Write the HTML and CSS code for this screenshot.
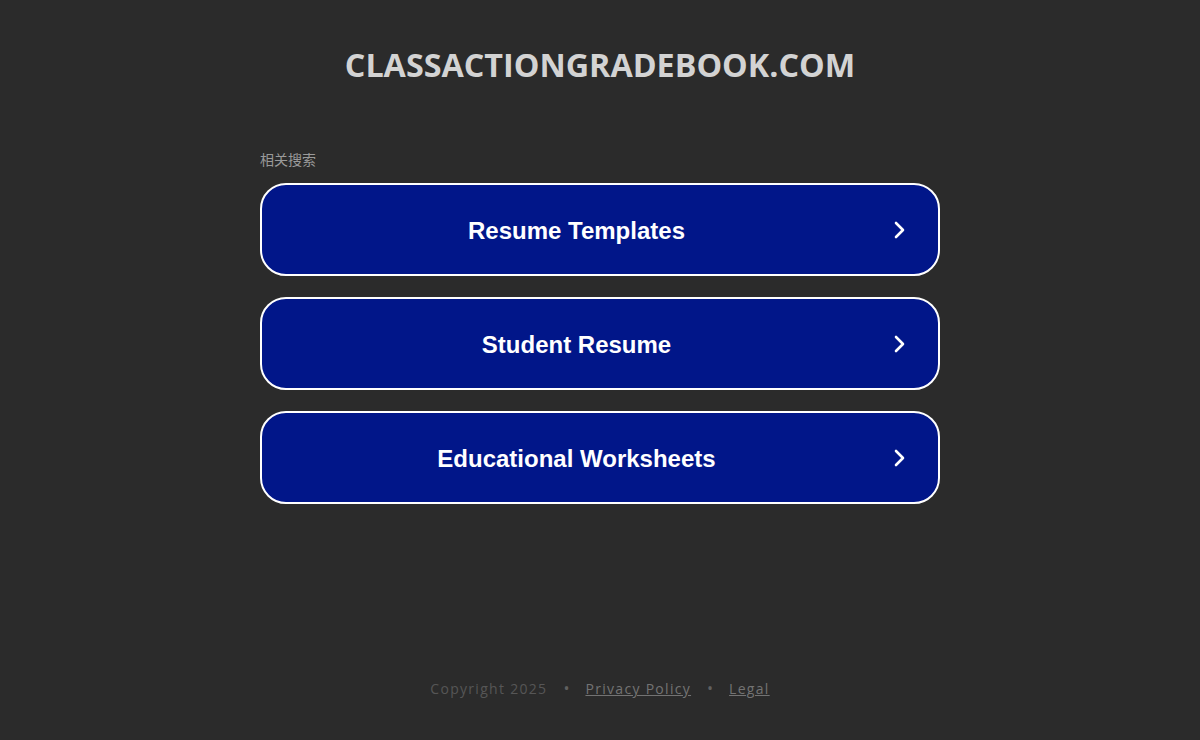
FILE: index.html
```html
<!DOCTYPE html>
<html lang="zh">
<head>
<meta charset="utf-8">
<title>classactiongradebook.com</title>
<link rel="stylesheet" href="styles.css">
</head>
<body>
<div class="page">
  <header class="header">
    <h1 class="domain">CLASSACTIONGRADEBOOK.COM</h1>
  </header>
  <main class="main">
    <div class="label">相关搜索</div>
    <ul class="links">
      <li><a class="btn" href="#"><span class="btn-text">Resume Templates</span><svg class="chev" viewBox="0 0 24 24" width="24" height="24"><path d="M9 5l7 7-7 7" fill="none" stroke="#fff" stroke-width="2.6" stroke-linecap="round" stroke-linejoin="round"/></svg></a></li>
      <li><a class="btn" href="#"><span class="btn-text">Student Resume</span><svg class="chev" viewBox="0 0 24 24" width="24" height="24"><path d="M9 5l7 7-7 7" fill="none" stroke="#fff" stroke-width="2.6" stroke-linecap="round" stroke-linejoin="round"/></svg></a></li>
      <li><a class="btn" href="#"><span class="btn-text">Educational Worksheets</span><svg class="chev" viewBox="0 0 24 24" width="24" height="24"><path d="M9 5l7 7-7 7" fill="none" stroke="#fff" stroke-width="2.6" stroke-linecap="round" stroke-linejoin="round"/></svg></a></li>
    </ul>
  </main>
  <footer class="footer">
    <span class="copy">Copyright 2025</span>
    <span class="dot">•</span>
    <a class="flink" href="#">Privacy Policy</a>
    <span class="dot">•</span>
    <a class="flink" href="#">Legal</a>
  </footer>
</div>
</body>
</html>
```
FILE: styles.css
```css
html, body {
  margin: 0;
  padding: 0;
  background: #2b2b2b;
}
.page {
  width: 1200px;
  height: 740px;
  display: flex;
  flex-direction: column;
  align-items: center;
}
.header {
  padding-top: 43px;
}
.domain {
  margin: 0;
  font-family: "Open Sans", "Liberation Sans", sans-serif;
  font-weight: 700;
  font-size: 32.3px;
  line-height: 42px;
  color: #d3d3d3;
  letter-spacing: 0;
}
.main {
  width: 680px;
  margin-top: 65px;
}
.label {
  font-family: "Noto Sans CJK SC", "Liberation Sans", sans-serif;
  font-size: 14px;
  line-height: 18px;
  color: #9a9a9a;
  margin-bottom: 15px;
}
.links {
  list-style: none;
  margin: 0;
  padding: 0;
  display: flex;
  flex-direction: column;
  gap: 21px;
}
.btn {
  box-sizing: border-box;
  height: 93px;
  border: 2px solid #ffffff;
  border-radius: 26px;
  background: #011689;
  display: flex;
  align-items: center;
  padding: 0 27px 0 0;
  text-decoration: none;
}
.btn-text {
  flex: 1;
  text-align: center;
  padding-left: 4px;
  padding-top: 2px;
  font-family: "Liberation Sans", Arial, sans-serif;
  font-weight: 700;
  font-size: 24px;
  color: #ffffff;
}
.chev {
  flex: none;
}
.footer {
  margin-top: auto;
  margin-bottom: 42px;
  display: flex;
  gap: 16px;
  font-family: "Open Sans", "DejaVu Sans", sans-serif;
  font-size: 14px;
  letter-spacing: 1.3px;
  color: #565656;
}
.dot {
  color: #606060;
  letter-spacing: 0;
  font-size: 16px;
  line-height: 19px;
}
.flink {
  color: #737373;
  text-decoration: underline;
}
```
